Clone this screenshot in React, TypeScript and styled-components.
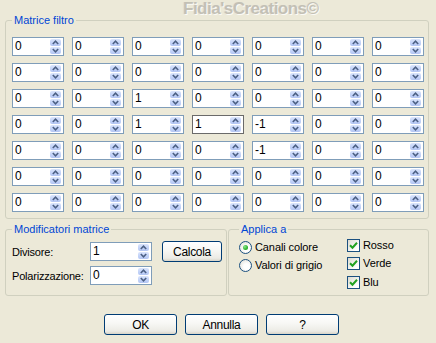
import React from "react";
import styled, { createGlobalStyle } from "styled-components";

const GlobalStyle = createGlobalStyle`
  html, body { margin: 0; padding: 0; background: #ece9d8; }
  * { box-sizing: border-box; }
`;

const matrix = [
  [0, 0, 0, 0, 0, 0, 0],
  [0, 0, 0, 0, 0, 0, 0],
  [0, 0, 1, 0, 0, 0, 0],
  [0, 0, 1, 1, -1, 0, 0],
  [0, 0, 0, 0, -1, 0, 0],
  [0, 0, 0, 0, 0, 0, 0],
  [0, 0, 0, 0, 0, 0, 0],
];

const Dialog = styled.div`
  width: 436px;
  height: 343px;
  padding: 0 7px 0 5px;
  display: flex;
  flex-direction: column;
  background: #ece9d8;
  font-family: "Liberation Sans", Tahoma, sans-serif;
  font-size: 11px;
  color: #000;
  overflow: hidden;
`;

const Watermark = styled.div`
  height: 14px;
  padding-left: 178px;
  font-weight: bold;
  font-size: 17px;
  line-height: 18px;
  letter-spacing: -0.5px;
  white-space: nowrap;
  color: #c3c0b5;
  text-shadow: 1px 1px 0 #fbfaf6, -1px 0 0 #e2dfd4;
`;

const Group = styled.fieldset<{ $pad: string }>`
  margin: 0;
  min-width: 0;
  border: 1px solid #d0d0bf;
  border-radius: 3px;
  padding: ${(p) => p.$pad};
`;

const Legend = styled.legend`
  padding: 0 2px;
  color: #0046d5;
  font-size: 11px;
  line-height: 13px;
`;

const MatrixGrid = styled.div`
  display: grid;
  grid-template-columns: repeat(7, 52px);
  column-gap: 8px;
  row-gap: 7px;
`;

const SpinBox = styled.div<{ $w: number; $focus?: boolean }>`
  width: ${(p) => p.$w}px;
  height: 19px;
  display: flex;
  align-items: stretch;
  background: #fff;
  border: 1px solid ${(p) => (p.$focus ? "#6a6a6a" : "#7f9db9")};
  padding: 1px 2px 1px 0;
`;

const SpinValue = styled.span`
  flex: 1;
  padding-left: 2px;
  font-size: 12px;
  line-height: 15px;
`;

const SpinButtons = styled.div`
  width: 11px;
  display: flex;
  flex-direction: column;
  gap: 1px;
`;

const Arrow = styled.div`
  flex: 1;
  display: flex;
  align-items: center;
  justify-content: center;
  border-radius: 2px;
  background: linear-gradient(180deg, #dbe5fc 0%, #c3d3f8 55%, #b3c5f3 100%);
`;

const Chevron = ({ down }: { down?: boolean }) => (
  <svg width="7" height="5" viewBox="0 0 7 5">
    <path
      d={down ? "M0.8 1 L3.5 3.8 L6.2 1" : "M0.8 4 L3.5 1.2 L6.2 4"}
      fill="none"
      stroke="#4d6185"
      strokeWidth="1.6"
    />
  </svg>
);

const Spinner = ({ value, width, focus }: { value: number; width: number; focus?: boolean }) => (
  <SpinBox $w={width} $focus={focus}>
    <SpinValue>{value}</SpinValue>
    <SpinButtons>
      <Arrow>
        <Chevron />
      </Arrow>
      <Arrow>
        <Chevron down />
      </Arrow>
    </SpinButtons>
  </SpinBox>
);

const BottomRow = styled.div`
  display: flex;
  gap: 1px;
  margin-top: 4px;
`;

const ModGrid = styled.div`
  display: grid;
  grid-template-columns: 78px 62px auto;
  grid-template-rows: 21px 19px;
  row-gap: 4px;
  align-items: center;
`;

const Label = styled.span`
  font-size: 11px;
  letter-spacing: -0.2px;
`;

const Button = styled.button<{ $w: number }>`
  width: ${(p) => p.$w}px;
  height: 21px;
  padding: 0;
  border: 1px solid #003c74;
  border-radius: 3px;
  background: linear-gradient(180deg, #ffffff 0%, #f7f7f4 45%, #ecebe5 85%, #d8d4c8 100%);
  font-family: "Liberation Sans", Tahoma, sans-serif;
  font-size: 12px;
  letter-spacing: -0.3px;
  color: #000;
`;

const CalcButton = styled(Button)`
  margin-left: 10px;
`;

const ApplyColumns = styled.div`
  display: flex;
`;

const OptionColumn = styled.div<{ $w?: number; $top: number }>`
  width: ${(p) => (p.$w ? `${p.$w}px` : "auto")};
  padding-top: ${(p) => p.$top}px;
  display: flex;
  flex-direction: column;
`;

const Option = styled.div<{ $h: number }>`
  height: ${(p) => p.$h}px;
  display: flex;
  align-items: flex-start;
  gap: 3px;
  font-size: 11px;
  line-height: 13px;
  letter-spacing: -0.1px;
`;

const Radio = styled.span<{ $on?: boolean }>`
  width: 13px;
  height: 13px;
  border-radius: 50%;
  border: 1px solid #1c5180;
  background: radial-gradient(circle at 60% 60%, #ffffff 30%, #dcdad0 100%);
  display: flex;
  align-items: center;
  justify-content: center;
  &::after {
    content: "";
    display: ${(p) => (p.$on ? "block" : "none")};
    width: 5px;
    height: 5px;
    border-radius: 50%;
    background: radial-gradient(circle at 35% 35%, #8ae68a 0%, #2fb32f 60%, #1a8a1a 100%);
  }
`;

const Check = styled.span`
  width: 13px;
  height: 13px;
  border: 1px solid #1c5180;
  background: linear-gradient(135deg, #dcdad0 0%, #ffffff 80%);
  display: flex;
  align-items: center;
  justify-content: center;
`;

const CheckMark = () => (
  <svg width="9" height="9" viewBox="0 0 9 9">
    <path d="M1 4.2 L3.5 6.7 L8 1.8" fill="none" stroke="#21a121" strokeWidth="2" />
  </svg>
);

const Footer = styled.div`
  display: flex;
  gap: 8px;
  margin-top: 18px;
  padding-left: 99px;
`;

const channels: [string, number][] = [
  ["Rosso", 18],
  ["Verde", 19],
  ["Blu", 13],
];

export default function App() {
  return (
    <Dialog>
      <GlobalStyle />
      <Watermark>Fidia'sCreations©</Watermark>
      <Group $pad="10px 6px 6px 6px">
        <Legend>Matrice filtro</Legend>
        <MatrixGrid>
          {matrix.map((row, r) =>
            row.map((v, c) => (
              <Spinner key={`${r}-${c}`} value={v} width={52} focus={r === 3 && c === 3} />
            ))
          )}
        </MatrixGrid>
      </Group>
      <BottomRow>
        <Group $pad="5px 4px 10px 6px" style={{ width: 222 }}>
          <Legend>Modificatori matrice</Legend>
          <ModGrid>
            <Label>Divisore:</Label>
            <Spinner value={1} width={62} />
            <CalcButton $w={60}>Calcola</CalcButton>
            <Label>Polarizzazione:</Label>
            <Spinner value={0} width={62} />
          </ModGrid>
        </Group>
        <Group $pad="3px 6px 0 10px" style={{ flex: 1 }}>
          <Legend>Applica a</Legend>
          <ApplyColumns>
            <OptionColumn $w={108} $top={2}>
              <Option $h={18}>
                <Radio $on />
                Canali colore
              </Option>
              <Option $h={18}>
                <Radio />
                Valori di grigio
              </Option>
            </OptionColumn>
            <OptionColumn $top={0}>
              {channels.map(([t, h]) => (
                <Option key={t} $h={h}>
                  <Check>
                    <CheckMark />
                  </Check>
                  {t}
                </Option>
              ))}
            </OptionColumn>
          </ApplyColumns>
        </Group>
      </BottomRow>
      <Footer>
        <Button $w={73}>OK</Button>
        <Button $w={73}>Annulla</Button>
        <Button $w={73}>?</Button>
      </Footer>
    </Dialog>
  );
}
